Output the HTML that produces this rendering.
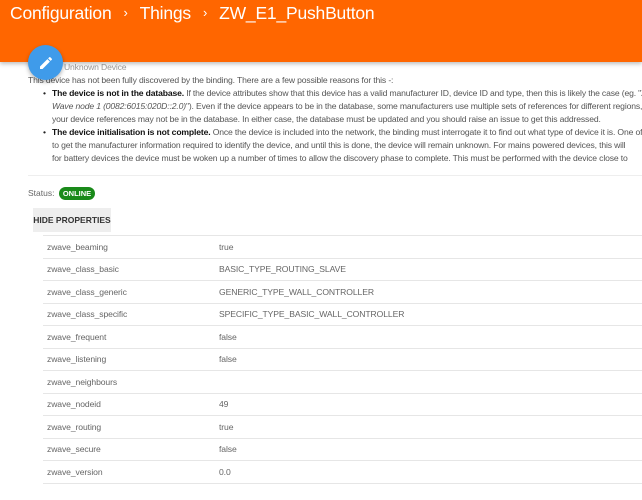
<!DOCTYPE html>
<html style="overflow:hidden;width:642px;height:500px"><head><meta charset="utf-8"><style>
*{margin:0;padding:0;box-sizing:border-box}
body{width:642px;height:500px;overflow:hidden;background:#fff;font-family:"Liberation Sans",sans-serif;color:#444;position:relative}
.hdr{position:absolute;left:0;top:0;width:642px;height:62px;background:#ff6600;box-shadow:0 2px 4px rgba(0,0,0,.25);z-index:2}
.hdr .t{position:absolute;left:10px;top:3px;color:#fff;font-size:17.5px;white-space:nowrap;letter-spacing:-0.2px}
.hdr .t span{font-size:13px;margin:0 12px;position:relative;top:-2px}
.fab{position:absolute;left:28px;top:45px;width:35px;height:35px;border-radius:50%;background:#3f9bea;box-shadow:0 2px 4px rgba(0,0,0,.3);z-index:3}
.txt{position:absolute;left:28px;top:61px;width:614px;overflow:hidden;font-size:8.6px;line-height:13px;white-space:nowrap;color:#555;letter-spacing:-0.15px}
.txt ul{margin-left:24px}
.txt li{list-style:none;position:relative}
.txt li.b:before{content:"•";position:absolute;left:-9px;color:#222}
.txt b{color:#111}
.div{position:absolute;left:28px;top:175px;width:614px;border-top:1px solid #eee}
.st{position:absolute;left:28px;top:187px;font-size:8.5px;color:#666}
.badge{display:inline-block;background:#1a8a1a;color:#fff;font-weight:bold;font-size:7.5px;border-radius:7px;padding:2px 4px;margin-left:2px}
.btn{position:absolute;left:33px;top:208px;width:78px;height:24px;background:#eee;font-size:8.5px;font-weight:bold;color:#333;line-height:24px;text-align:center}
table{position:absolute;left:43px;top:235px;width:599px;border-collapse:collapse;font-size:8.6px;color:#666;letter-spacing:-0.1px}
td{height:22.5px;border-top:1px solid #e6e6e6;border-bottom:1px solid #e6e6e6;padding-left:4px}
td:first-child{width:172px}
</style></head><body>
<div class="hdr"><div class="t">Configuration<span>›</span>Things<span>›</span>ZW_E1_PushButton</div></div>
<div class="fab"><svg width="35" height="35" viewBox="0 0 35 35"><path d="M12 21.5v2.5h2.5l7.4-7.4-2.5-2.5zM23.8 14.7a.7.7 0 000-1l-1.5-1.5a.7.7 0 00-1 0l-1.2 1.2 2.5 2.5z" fill="#fff"/></svg></div>
<div class="txt">
<div style="color:#999;padding-left:36px">Unknown Device</div>
<div>This device has not been fully discovered by the binding. There are a few possible reasons for this -:</div>
<ul>
<li class="b"><b>The device is not in the database.</b> If the device attributes show that this device has a valid manufacturer ID, device ID and type, then this is likely the case (eg. "Z-</li>
<li><i>Wave node 1 (0082:6015:020D::2.0)</i>"). Even if the device appears to be in the database, some manufacturers use multiple sets of references for different regions,</li>
<li>your device references may not be in the database. In either case, the database must be updated and you should raise an issue to get this addressed.</li>
<li class="b"><b>The device initialisation is not complete.</b> Once the device is included into the network, the binding must interrogate it to find out what type of device it is. One of the</li>
<li>to get the manufacturer information required to identify the device, and until this is done, the device will remain unknown. For mains powered devices, this will</li>
<li>for battery devices the device must be woken up a number of times to allow the discovery phase to complete. This must be performed with the device close to</li>
</ul></div>
<div class="div"></div>
<div class="st">Status: <span class="badge">ONLINE</span></div>
<div class="btn">HIDE PROPERTIES</div>
<table>
<tr><td>zwave_beaming</td><td>true</td></tr>
<tr><td>zwave_class_basic</td><td>BASIC_TYPE_ROUTING_SLAVE</td></tr>
<tr><td>zwave_class_generic</td><td>GENERIC_TYPE_WALL_CONTROLLER</td></tr>
<tr><td>zwave_class_specific</td><td>SPECIFIC_TYPE_BASIC_WALL_CONTROLLER</td></tr>
<tr><td>zwave_frequent</td><td>false</td></tr>
<tr><td>zwave_listening</td><td>false</td></tr>
<tr><td>zwave_neighbours</td><td></td></tr>
<tr><td>zwave_nodeid</td><td>49</td></tr>
<tr><td>zwave_routing</td><td>true</td></tr>
<tr><td>zwave_secure</td><td>false</td></tr>
<tr><td>zwave_version</td><td>0.0</td></tr>
</table>
</body></html>
